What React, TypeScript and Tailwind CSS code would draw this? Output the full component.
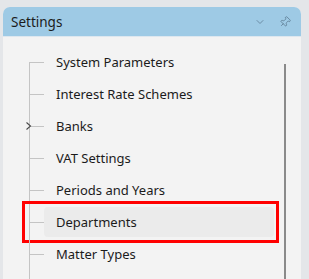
import { ChevronDown, Pin } from "lucide-react";

const items = [
  { label: "System Parameters" },
  { label: "Interest Rate Schemes" },
  { label: "Banks", expandable: true },
  { label: "VAT Settings" },
  { label: "Periods and Years" },
  { label: "Departments", selected: true },
  { label: "Matter Types" },
  { label: "" },
];

export default function App() {
  return (
    <div
      className="h-[279px] w-[309px] overflow-hidden bg-[#e4e6e9] pl-[3px] pr-[8px] pt-[7px]"
      style={{ fontFamily: '"Segoe UI", "Noto Sans", sans-serif' }}
    >
      <div className="flex h-[300px] flex-col overflow-hidden rounded-t-[7px] bg-[#f3f3f3]">
        {/* header */}
        <div className="flex h-[30px] shrink-0 items-center border-b border-[#dde7ef] bg-[#9ecae5] pl-[8px] pr-[10px]">
          <span className="flex-1 pt-[1px] text-[13.5px] text-[#1b1b1b]">Settings</span>
          <ChevronDown size={12} strokeWidth={1.6} className="mr-[13px] text-[#5f7d95]" />
          <Pin size={12} strokeWidth={1.6} className="rotate-45 text-[#5f7d95]" />
        </div>

        {/* tree */}
        <div className="relative flex-1 pl-[26px] pt-[9px]">
          <div className="absolute right-[15px] top-[27px] h-[300px] w-[2px] bg-[#8a8a8a]" />
          {items.map((item, i) => (
            <div key={i} className="relative flex h-8 items-center">
              <div className="relative h-full w-[15px] shrink-0">
                <div
                  className={
                    i === 0
                      ? "absolute bottom-0 left-0 top-1/2 w-px bg-[#c4c4c4]"
                      : "absolute bottom-0 left-0 top-0 w-px bg-[#c4c4c4]"
                  }
                />
                {item.label && <div className="absolute left-0 top-1/2 h-px w-[15px] bg-[#c4c4c4]" />}
                {item.expandable && (
                  <svg
                    width="6"
                    height="8"
                    viewBox="0 0 6 8"
                    className="absolute left-[-3px] top-1/2 -translate-y-1/2"
                  >
                    <polyline points="0.5,0.5 4.5,4 0.5,7.5" fill="none" stroke="#4a4a4a" strokeWidth="1.1" />
                  </svg>
                )}
              </div>
              <div
                className={
                  item.selected
                    ? "flex h-[30px] w-[230px] items-center rounded-[4px] bg-[#ebebeb] pl-[12px] pt-[2px] text-[13px] text-[#1b1b1b]"
                    : "flex h-[30px] w-[230px] items-center pl-[12px] pt-[2px] text-[13px] text-[#1b1b1b]"
                }
              >
                {item.label}
              </div>
              {item.selected && (
                <div className="pointer-events-none absolute -left-[7px] -top-[5px] h-[42px] w-[257px] border-[3px] border-[#ff0000]" />
              )}
            </div>
          ))}
        </div>
      </div>
    </div>
  );
}
